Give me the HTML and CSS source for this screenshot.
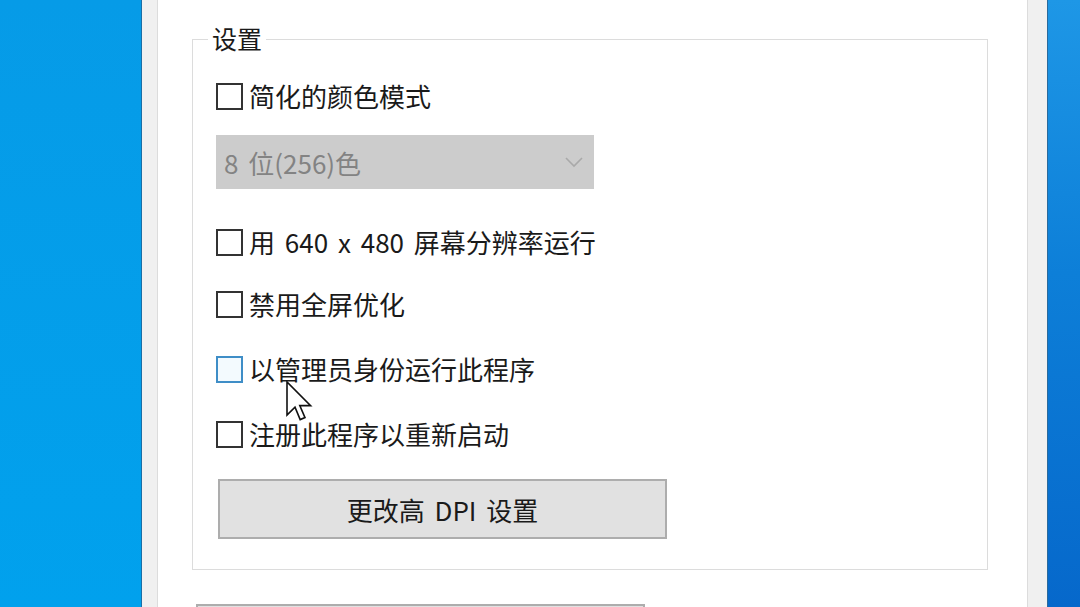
FILE: index.html
```html
<!DOCTYPE html>
<html lang="zh-CN">
<head>
<meta charset="utf-8">
<link rel="stylesheet" href="styles.css">
</head>
<body>
<div class="screen">
  <div class="desk desk-left"></div>
  <div class="window">
    <div class="page">
      <div class="group">
        <span class="legend">设置</span>
        <div class="row">
          <span class="box"></span><span class="label">简化的颜色模式</span>
        </div>
        <div class="select">
          <span class="select-text">8 位(256)色</span>
          <svg class="chev" width="20" height="12" viewBox="0 0 20 12"><path d="M2 2 L10 10 L18 2" fill="none" stroke="#a9a9a9" stroke-width="1.6"/></svg>
        </div>
        <div class="row row-first">
          <span class="box"></span><span class="label">用 640 x 480 屏幕分辨率运行</span>
        </div>
        <div class="row">
          <span class="box"></span><span class="label">禁用全屏优化</span>
        </div>
        <div class="row">
          <span class="box box-hover"></span><span class="label">以管理员身份运行此程序</span>
        </div>
        <div class="row">
          <span class="box"></span><span class="label">注册此程序以重新启动</span>
        </div>
        <div class="button">更改高 DPI 设置</div>
      </div>
      <div class="button button-next"></div>
    </div>
  </div>
  <div class="desk desk-right"></div>
  <svg class="cursor" width="28" height="44" viewBox="0 0 14 22"><path d="M1 1 L1 17.5 L5 13.6 L7.6 19.8 L10 18.8 L7.4 12.8 L12.8 12.8 Z" fill="#ffffff" stroke="#111111" stroke-width="0.8" stroke-linejoin="miter"/></svg>
</div>
</body>
</html>
```

FILE: styles.css
```css
html, body {
  margin: 0;
  padding: 0;
  width: 1080px;
  height: 607px;
  overflow: hidden;
  background: #ffffff;
}

.screen {
  position: relative;
  display: flex;
  width: 1080px;
  height: 607px;
  overflow: hidden;
  font-family: "Noto Sans CJK SC", "Noto Sans", sans-serif;
  color: #1a1a1a;
  word-spacing: 4px;
}

.desk {
  flex: none;
  height: 100%;
}

.desk-left {
  width: 141px;
  background: linear-gradient(180deg, #069be7 0%, #01a1ed 100%);
  border-right: 1px solid #1b6fa6;
}

.desk-right {
  width: 32px;
  background: linear-gradient(180deg, #1e97e6 0%, #0d7fd8 45%, #0668cb 100%);
  border-left: 1px solid #2a6a9c;
}

.window {
  flex: 1;
  display: flex;
  background: #f0f0f0;
  padding: 0 19px 0 15px;
}

.page {
  flex: 1;
  background: #ffffff;
  border-left: 1px solid #dcdcdc;
  border-right: 1px solid #dcdcdc;
  padding: 39px 39px 0 34px;
  display: flex;
  flex-direction: column;
  overflow: hidden;
}

.group {
  position: relative;
  border: 1px solid #dcdcdc;
  padding: 43px 20px 30px 23px;
  display: flex;
  flex-direction: column;
  align-items: flex-start;
}

.legend {
  position: absolute;
  left: 15px;
  top: -21px;
  padding: 0 4px;
  background: #ffffff;
  font-size: 25px;
  line-height: 38px;
}

.row {
  display: flex;
  align-items: center;
  height: 26px;
  margin-bottom: 39px;
}

.row-first {
  margin-top: 40px;
  margin-bottom: 36px;
}

.box {
  flex: none;
  box-sizing: border-box;
  width: 27px;
  height: 27px;
  border: 2px solid #333333;
  background: #ffffff;
}

.box-hover {
  border-color: #3f8ec7;
  background: #f3fafe;
}

.label {
  margin-left: 6px;
  font-size: 26px;
  line-height: 30px;
  white-space: nowrap;
}

.select {
  display: flex;
  align-items: center;
  justify-content: space-between;
  box-sizing: border-box;
  width: 378px;
  height: 54px;
  margin-top: -13px;
  background: #cccccc;
  padding: 0 10px 0 8px;
}

.select-text {
  font-size: 26px;
  color: #838383;
}

.chev {
  flex: none;
}

.button {
  box-sizing: border-box;
  width: 449px;
  height: 60px;
  margin-left: 2px;
  margin-top: -7px;
  background: #e1e1e1;
  border: 2px solid #adadad;
  display: flex;
  align-items: center;
  justify-content: center;
  font-size: 26px;
}

.button-next {
  flex: none;
  margin-top: 34px;
  margin-left: 4px;
  height: 3px;
  border-bottom: 0;
}

.cursor {
  position: absolute;
  left: 285px;
  top: 380px;
}
```
